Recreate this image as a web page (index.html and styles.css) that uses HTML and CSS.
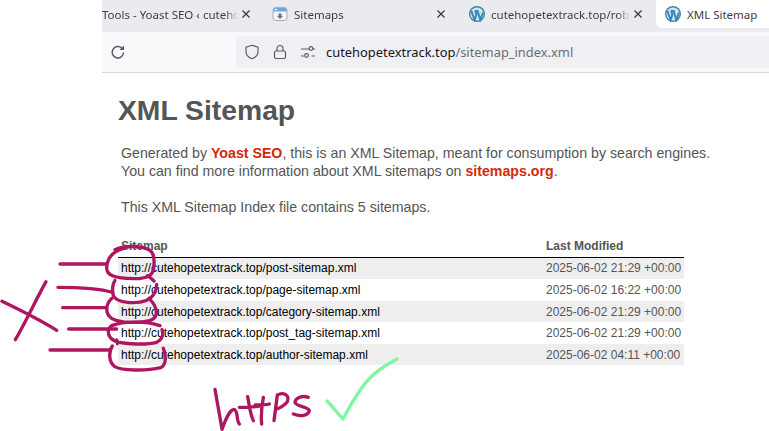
FILE: index.html
```html
<!DOCTYPE html>
<html lang="en">
<head>
<meta charset="utf-8">
<title>XML Sitemap</title>
<link rel="stylesheet" href="styles.css">
</head>
<body>
<div class="browser">
  <div class="tabbar">
    <div class="tab tab-first">
      <span class="tab-title">Tools - Yoast SEO ‹ cutehopetextrack</span>
      <svg class="tab-close" viewBox="0 0 10 10"><path d="M1.5 1.5l7 7M8.5 1.5l-7 7"/></svg>
    </div>
    <div class="tab">
      <svg class="favicon" viewBox="0 0 16 16"><rect x="1" y="1.500" width="14" height="13" rx="2.500" fill="#f4f6fa" stroke="#a4acb8"/><path d="M1.500 4a2 2 0 0 1 2-2h9a2 2 0 0 1 2 2v1.500h-13z" fill="#6aa5dd"/><rect x="3" y="3" width="2" height="1.200" fill="#fff"/><path d="M6.500 7.500h3v2.500h1.500L8 13 5 10h1.500z" fill="#6d7683"/></svg>
      <span class="tab-title">Sitemaps</span>
      <svg class="tab-close" viewBox="0 0 10 10"><path d="M1.5 1.5l7 7M8.5 1.5l-7 7"/></svg>
    </div>
    <div class="tab">
      <svg class="favicon" viewBox="0 0 16 16"><circle cx="8" cy="8" r="8" fill="#3a87b2"/><circle cx="8" cy="8" r="6.600" fill="#cfe4ef"/><path d="M2.400 5l3.200 9 1.800-5.500-1.100-3.500M5.700 5h4M8.600 5l2.800 9 2.600-7.500" fill="none" stroke="#3a87b2" stroke-width="2"/></svg>
      <span class="tab-title">cutehopetextrack.top/robots.txt</span>
      <svg class="tab-close" viewBox="0 0 10 10"><path d="M1.5 1.5l7 7M8.5 1.5l-7 7"/></svg>
    </div>
    <div class="tab tab-active">
      <svg class="favicon" viewBox="0 0 16 16"><circle cx="8" cy="8" r="8" fill="#3a87b2"/><circle cx="8" cy="8" r="6.600" fill="#cfe4ef"/><path d="M2.400 5l3.200 9 1.800-5.500-1.100-3.500M5.700 5h4M8.600 5l2.800 9 2.600-7.500" fill="none" stroke="#3a87b2" stroke-width="2"/></svg>
      <span class="tab-title">XML Sitemap</span>
    </div>
  </div>
  <div class="toolbar">
    <svg class="reload" viewBox="0 0 16 16"><path d="M13.600 8.500a5.700 5.700 0 1 1-1.700-4.300l1.600 1.500"/><path class="reload-head" d="M14 1.500v4.500H9.500z"/></svg>
    <div class="urlbar">
      <svg class="shield" viewBox="0 0 16 16"><path d="M8 1.300l6 1.800v4.400c0 3.500-2.500 5.900-6 7.200-3.500-1.300-6-3.700-6-7.200V3.100z"/></svg>
      <svg class="lock" viewBox="0 0 16 16"><rect x="2.500" y="7" width="11" height="7.500" rx="1.500"/><path d="M5 7V4.500a3 3 0 0 1 6 0V7"/></svg>
      <svg class="perm" viewBox="0 0 16 16"><path d="M1 5h8M1 12h3M11.500 12H15M12 5h3"/><circle cx="11" cy="4.500" r="1.800"/><circle cx="6.500" cy="11.500" r="1.800"/></svg>
      <span class="url"><span class="url-host">cutehopetextrack.top</span>/sitemap_index.xml</span>
    </div>
  </div>
  <main class="content">
    <h1 class="title">XML Sitemap</h1>
    <p class="intro">Generated by <a class="brand" href="#">Yoast SEO</a>, this is an XML Sitemap, meant for consumption by search engines.<br>You can find more information about XML sitemaps on <a class="brand" href="#">sitemaps.org</a>.</p>
    <p class="count">This XML Sitemap Index file contains 5 sitemaps.</p>
    <table class="sitemaps">
      <thead><tr><th>Sitemap</th><th class="col-date">Last Modified</th></tr></thead>
      <tbody>
        <tr class="row-tall"><td><a href="#">http://cutehopetextrack.top/post-sitemap.xml</a></td><td>2025-06-02 21:29 +00:00</td></tr>
        <tr class="row-tall"><td><a href="#">http://cutehopetextrack.top/page-sitemap.xml</a></td><td>2025-06-02 16:22 +00:00</td></tr>
        <tr><td><a href="#">http://cutehopetextrack.top/category-sitemap.xml</a></td><td>2025-06-02 21:29 +00:00</td></tr>
        <tr class="row-tall"><td><a href="#">http://cutehopetextrack.top/post_tag-sitemap.xml</a></td><td>2025-06-02 21:29 +00:00</td></tr>
        <tr><td><a href="#">http://cutehopetextrack.top/author-sitemap.xml</a></td><td>2025-06-02 04:11 +00:00</td></tr>
      </tbody>
    </table>
  </main>
</div>
<svg class="ink" viewBox="0 0 769 431" aria-hidden="true">
  <g transform="translate(0 235) scale(.33333)" class="ink-red">
    <path d="M180 87H320"/>
    <path d="M372 40C340 48 322 66 320 98C320 122 345 130 400 131C435 132 458 125 461 100C465 65 462 45 430 38C400 32 365 34 345 44M442 122C450 126 456 132 462 138"/>
    <path d="M174 157C230 157 290 158 338 172"/>
    <path d="M345 136C336 150 336 165 340 182C350 205 410 208 440 196C462 186 470 165 470 148"/>
    <path d="M188 218H318"/>
    <path d="M336 190C318 205 313 235 335 250C360 265 420 265 450 257C480 245 472 215 447 190"/>
    <path d="M206 282H350"/>
    <path d="M480 272C440 258 370 258 335 272C318 285 322 310 350 320C380 328 440 330 470 322C490 312 490 295 486 284M350 315C352 318 354 322 352 326"/>
    <path d="M150 345H330"/>
    <path d="M337 333C326 350 325 378 343 394C365 408 440 408 482 398C500 390 498 360 490 340"/>
    <path d="M138 140C110 190 75 265 46 314"/>
    <path d="M6 199C60 225 120 255 170 286"/>
  </g>
  <g transform="translate(200 350) scale(.33333)" class="ink-red">
    <path d="M45 118C52 160 60 200 66 238C78 205 88 180 102 178C115 180 108 210 118 222"/>
    <path d="M143 140C148 165 150 190 160 212M118 172C135 172 165 172 180 168"/>
    <path d="M190 142C185 170 182 195 185 222M165 165C180 165 200 165 208 162"/>
    <path d="M222 212C226 180 230 150 232 135C250 125 270 135 262 155C250 170 235 175 228 178"/>
    <path d="M325 142C305 135 285 145 285 158C290 170 325 170 328 182C325 198 300 200 280 192"/>
  </g>
  <path class="ink-green" d="M327 401C333 407 338 414 343 419C352 402 362 385 372 376C380 368 390 363 397 359"/>
</svg>
</body>
</html>
```
FILE: styles.css
```css
* { box-sizing: border-box; }
html, body { margin: 0; height: 100%; overflow: hidden; background: #fff; }
body { position: relative; font-family: "Liberation Sans", Arial, sans-serif; }

.browser { margin-left: 102px; display: flex; flex-direction: column; height: 431px; }

.tabbar { display: flex; gap: 4px; height: 32px; padding-bottom: 4px; background: #eaeaef; overflow: hidden; flex: none; }
.tab { display: flex; align-items: center; width: 193px; flex: none; padding: 0 9px 0 10px; font-family: "Noto Sans", sans-serif; font-size: 11.500px; color: #3c3c46; }
.tab-first { width: 156px; padding: 0 7px 0 0; }
.tab-active { width: 113px; padding-left: 9px; background: #fff; border-radius: 0 0 0 6px; }
.tab-title { flex: 1; min-width: 0; white-space: nowrap; overflow: hidden; -webkit-mask-image: linear-gradient(to left, transparent 0, #000 14px); mask-image: linear-gradient(to left, transparent 0, #000 14px); }
.tab-active .tab-title { -webkit-mask-image: none; mask-image: none; }
.favicon { width: 16px; height: 16px; flex: none; margin-right: 6px; }
.tab-close { width: 10px; height: 10px; flex: none; margin-left: 2px; }
.tab-close path { stroke: #3a3a42; stroke-width: 1.300; fill: none; }

.toolbar { display: flex; align-items: center; height: 41px; flex: none; background: #f9f9fb; border-bottom: 1px solid #d6d6da; padding: 0 0 1px 8px; }
.reload { width: 16px; height: 16px; flex: none; margin-right: 110px; }
.reload path { fill: none; stroke: #5b5b66; stroke-width: 1.500; }
.reload .reload-head { fill: #5b5b66; stroke: none; }
.urlbar { display: flex; align-items: center; flex: 1; height: 32px; background: #f0f0f4; border-radius: 4px 0 0 4px; padding-left: 8px; }
.urlbar svg { width: 16px; height: 16px; flex: none; fill: none; stroke: #5b5b66; stroke-width: 1.200; }
.lock { margin-left: 12px; }
.perm { margin-left: 12px; }
.url { margin-left: 10px; font-family: "Noto Sans", sans-serif; font-size: 12.900px; color: #6c6c75; white-space: nowrap; }
.url-host { color: #15141a; }

.content { flex: 1; padding: 21px 0 0 16px; color: #444; }
.title { margin: 0; font-size: 28.300px; line-height: 32px; font-weight: 700; color: #555; }
.intro { margin: 18px 0 0 3px; font-size: 14.200px; line-height: 18px; color: #555; }
.count { margin: 18px 0 0 3px; font-size: 14.200px; line-height: 18px; color: #555; }
.brand { color: #d4290b; font-weight: 700; text-decoration: none; }

.sitemaps { margin-top: 21px; width: 566px; border-collapse: collapse; table-layout: fixed; font-size: 12px; }
.sitemaps th { text-align: left; height: 20px; padding: 0 0 2px 3px; color: #555; border-bottom: 1px solid #000; font-weight: 700; }
.sitemaps .col-date { width: 141px; padding-left: 3px; }
.sitemaps td { height: 21px; padding: 0 0 0 3px; color: #555; white-space: nowrap; }
.sitemaps .row-tall td { height: 22px; }
.sitemaps td a { color: #000; text-decoration: none; }
.sitemaps tbody tr:nth-child(odd) { background: #eee; }

.ink { position: absolute; left: 0; top: 0; width: 769px; height: 431px; pointer-events: none; }
.ink-red path { fill: none; stroke: #ae1760; stroke-width: 10; stroke-linecap: round; stroke-linejoin: round; }
.ink-green { fill: none; stroke: #80f5a2; stroke-width: 3.300; stroke-linecap: round; stroke-linejoin: round; }
```
